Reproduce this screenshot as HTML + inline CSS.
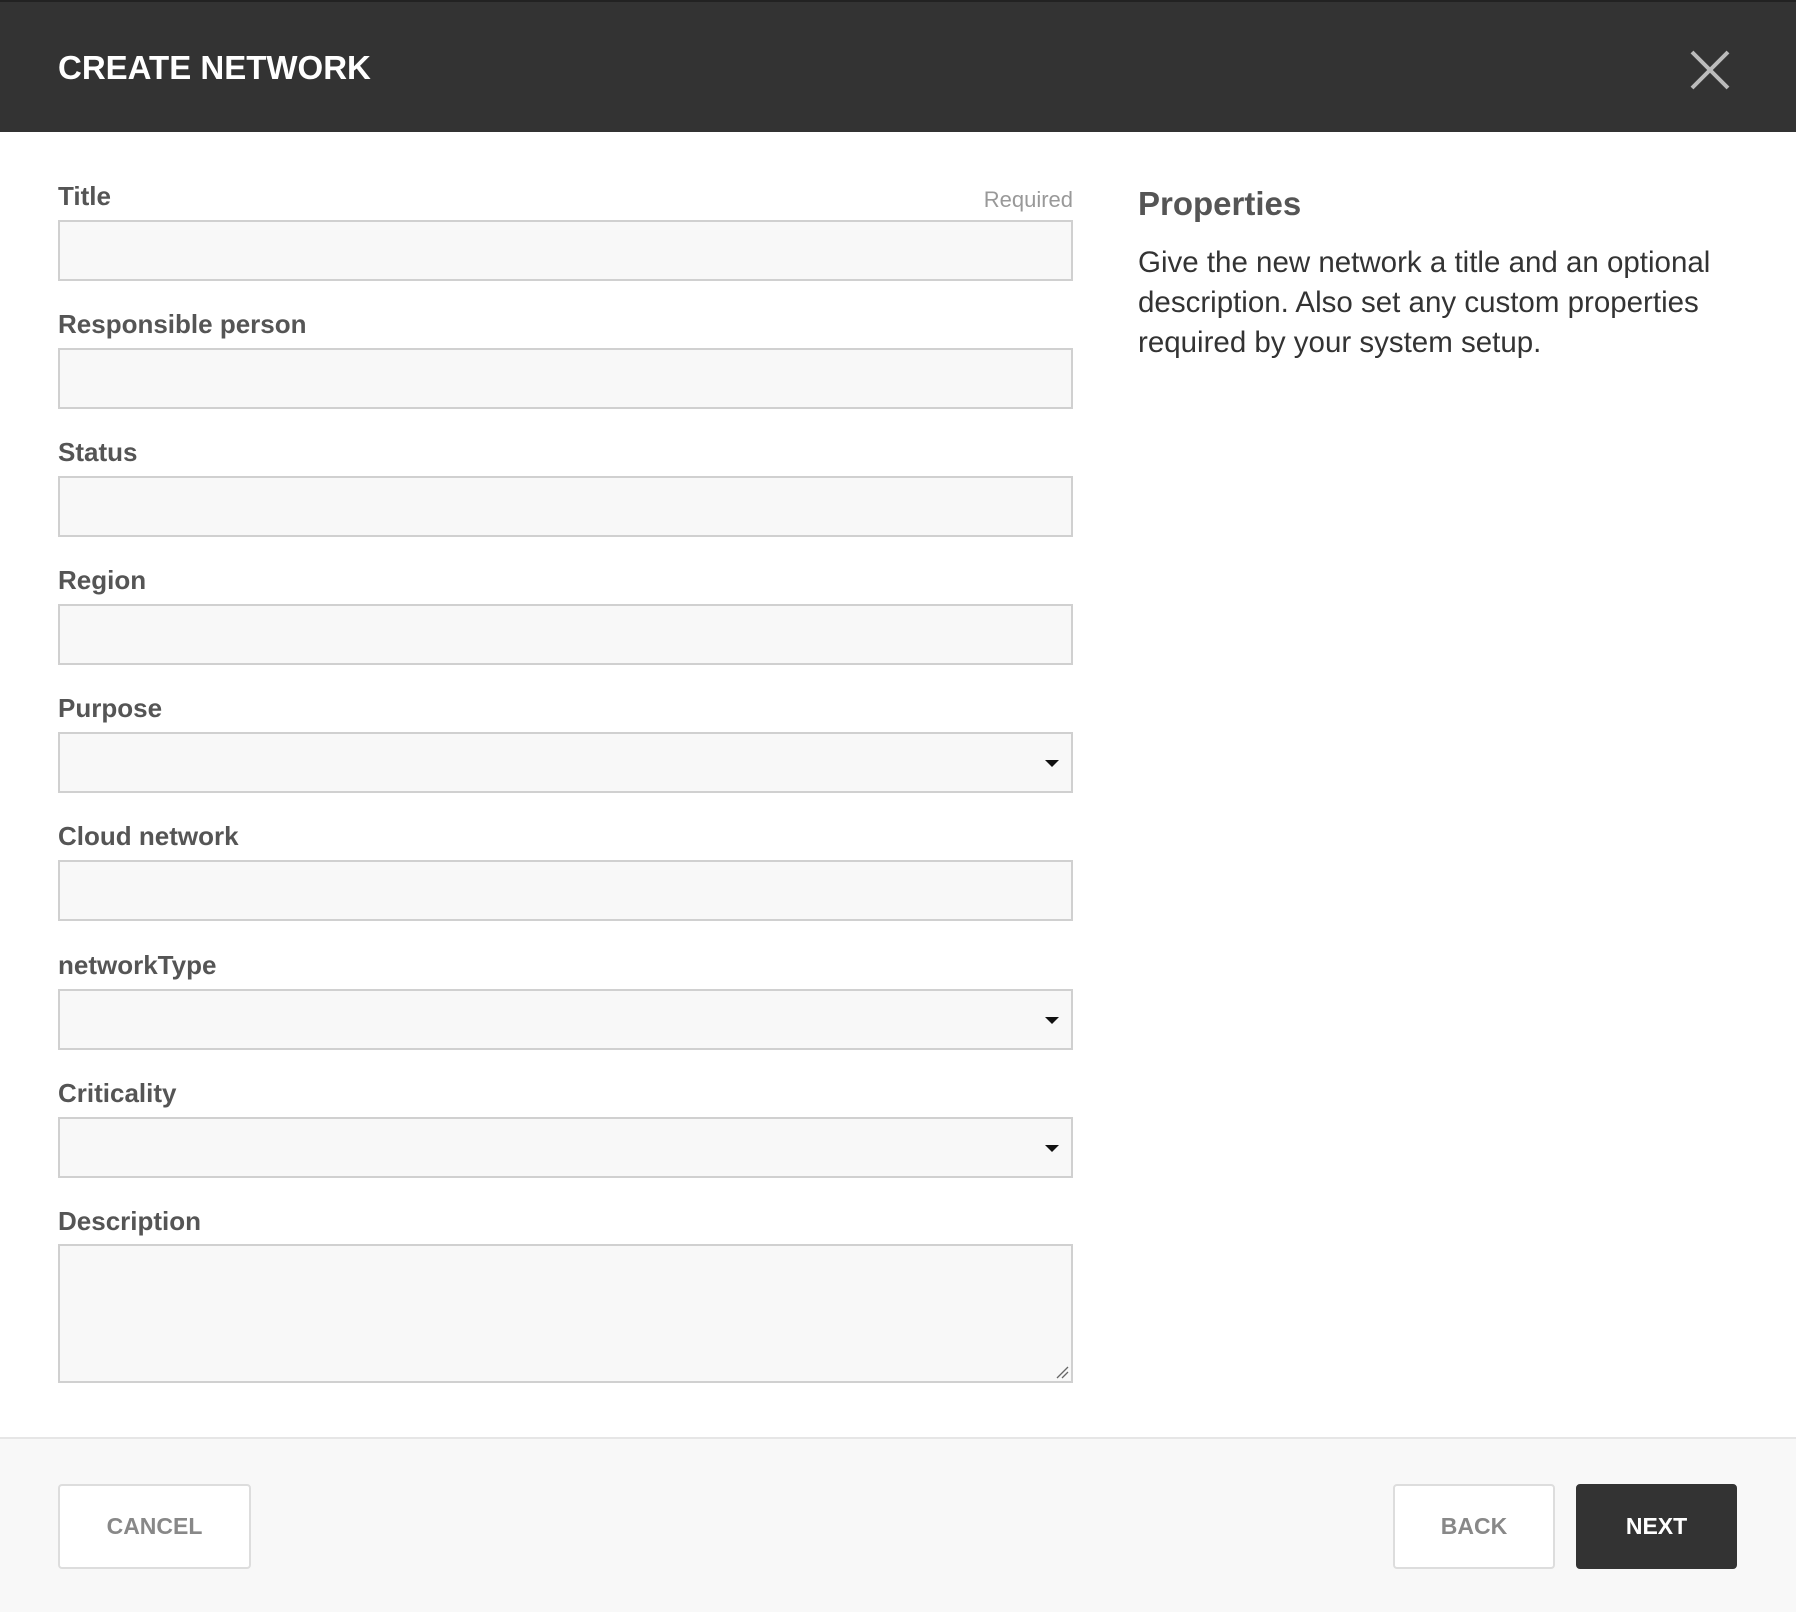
<!DOCTYPE html>
<html><head><meta charset="utf-8"><style>
*{box-sizing:border-box;margin:0;padding:0}
body{width:1796px;height:1612px;background:#fff;font-family:"Liberation Sans",sans-serif;position:relative;overflow:hidden}
.hdr{position:absolute;left:0;top:0;width:1796px;height:132px;background:#333;border-top:2px solid #222}
.hdr h1{position:absolute;left:58px;top:47px;font-size:33px;color:#fff;font-weight:bold;letter-spacing:0}
.lbl{position:absolute;left:58px;font-size:26px;font-weight:bold;color:#555}
.box{position:absolute;left:58px;width:1015px;height:61px;background:#f8f8f8;border:2px solid #d0d0d0}
.arr{position:absolute;right:12px;top:26px;width:0;height:0;border-left:7px solid transparent;border-right:7px solid transparent;border-top:7px solid #111}
.req{position:absolute;right:723px;top:187px;font-size:22px;color:#999}
.prop{position:absolute;left:1138px;top:185px;font-size:33px;font-weight:bold;color:#555}
.para{position:absolute;left:1138px;top:243px;white-space:nowrap;font-size:29.5px;line-height:40px;color:#333}
.foot{position:absolute;left:0;top:1437px;width:1796px;height:175px;background:#f8f8f8;border-top:2px solid #e6e6e6}
.btn{position:absolute;top:1484px;height:85px;border:2px solid #ddd;background:#fff;border-radius:4px;font-size:23px;font-weight:bold;color:#888;text-align:center;line-height:81px}
</style></head><body>
<div class="hdr"><h1>CREATE NETWORK</h1>
<svg style="position:absolute;left:1690px;top:48px" width="40" height="40" viewBox="0 0 40 40"><path d="M2 2L38 38M38 2L2 38" stroke="#bbb" stroke-width="4"/></svg></div>
<div class="lbl" style="top:181px">Title</div><div class="req">Required</div>
<div class="box" style="top:220px"></div>
<div class="lbl" style="top:309px">Responsible person</div>
<div class="box" style="top:348px"></div>
<div class="lbl" style="top:437px">Status</div>
<div class="box" style="top:476px"></div>
<div class="lbl" style="top:565px">Region</div>
<div class="box" style="top:604px"></div>
<div class="lbl" style="top:693px">Purpose</div>
<div class="box" style="top:732px"><div class="arr"></div></div>
<div class="lbl" style="top:821px">Cloud network</div>
<div class="box" style="top:860px"></div>
<div class="lbl" style="top:950px">networkType</div>
<div class="box" style="top:989px"><div class="arr"></div></div>
<div class="lbl" style="top:1078px">Criticality</div>
<div class="box" style="top:1117px"><div class="arr"></div></div>
<div class="lbl" style="top:1206px">Description</div>
<div class="box" style="top:1244px;height:139px">
<svg style="position:absolute;right:2px;bottom:2px" width="14" height="14"><path d="M2 13L13 2M7 13L13 7" stroke="#666" stroke-width="1.3"/></svg></div>
<div class="prop">Properties</div>
<div class="para">Give the new network a title and an optional<br>description. Also set any custom properties<br>required by your system setup.</div>
<div class="foot"></div>
<div class="btn" style="left:58px;width:193px">CANCEL</div>
<div class="btn" style="left:1393px;width:162px">BACK</div>
<div class="btn" style="left:1576px;width:161px;background:#333;border-color:#333;color:#fff">NEXT</div>
</body></html>
